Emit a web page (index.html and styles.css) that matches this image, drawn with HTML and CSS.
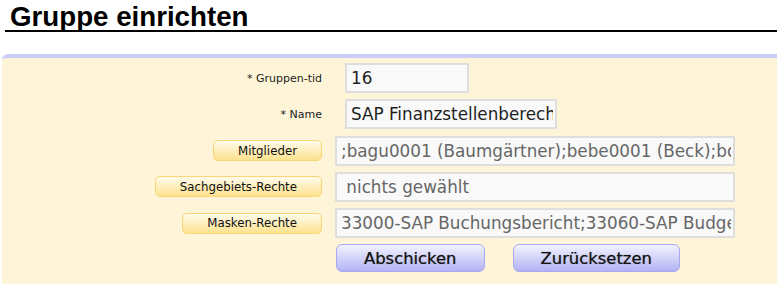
FILE: index.html
```html
<!DOCTYPE html>
<html lang="de">
<head>
    <meta charset="UTF-8">
    <title>Gruppe einrichten</title>
    <link rel="stylesheet" href="styles.css">
</head>
<body>
    <h1 class="page-title">Gruppe einrichten</h1>

    <div class="panel">
        <form class="group-form">
            <label class="field-label">* Gruppen-tid</label>
            <div class="field"><input class="text-input input-id" type="text" value="16"></div>

            <label class="field-label">* Name</label>
            <div class="field"><input class="text-input input-name" type="text" value="SAP Finanzstellenberechtigung"></div>

            <div class="field-label"><button type="button" class="pick-button">Mitglieder</button></div>
            <div class="field"><input class="text-input input-wide" type="text" readonly value=";bagu0001 (Baumgärtner);bebe0001 (Beck);bo"></div>

            <div class="field-label"><button type="button" class="pick-button">Sachgebiets-Rechte</button></div>
            <div class="field"><input class="text-input input-wide" type="text" readonly value=" nichts gewählt"></div>

            <div class="field-label"><button type="button" class="pick-button">Masken-Rechte</button></div>
            <div class="field"><input class="text-input input-wide" type="text" readonly value="33000-SAP Buchungsbericht;33060-SAP Budgetbericht"></div>

            <div></div>
            <div class="actions">
                <button type="submit" class="submit-button">Abschicken</button>
                <button type="reset" class="submit-button">Zurücksetzen</button>
            </div>
        </form>
    </div>
</body>
</html>
```

FILE: styles.css
```css
body {
    margin: 0;
    font-family: "DejaVu Sans", Verdana, sans-serif;
    color: #222;
    background: #fff;
    overflow: hidden;
}

.page-title {
    margin: 3px 0 0 5px;
    padding-left: 5px;
    font-family: "Liberation Sans", Arial, sans-serif;
    font-size: 27.7px;
    line-height: 27px;
    font-weight: bold;
    color: #000;
    border-bottom: 2px solid #000;
}

.panel {
    margin: 22px 0 0 2px;
    min-height: 221px;
    border-top: 4px solid #ccccfa;
    border-radius: 6px 0 0 0;
    background: #fef5d8;
    padding-top: 5px;
}

.group-form {
    display: grid;
    grid-template-columns: 320px 1fr;
    column-gap: 13px;
    row-gap: 6.3px;
    align-items: center;
}

.field-label {
    text-align: right;
    font-size: 11px;
    color: #222;
}

.field {
    height: 30px;
    display: flex;
    align-items: center;
}

.text-input {
    box-sizing: border-box;
    height: 30px;
    margin: 0;
    padding: 0 2px 0 4px;
    border: 2px solid #dedede;
    background: #f9f9f9;
    font-family: "DejaVu Sans", Verdana, sans-serif;
    font-size: 16.8px;
    color: #1e1e1e;
    outline: none;
}

.input-id {
    margin-left: 10px;
    width: 124px;
}

.input-name {
    margin-left: 10px;
    width: 212px;
}

.input-wide {
    width: 400px;
    color: #666;
}

.pick-button {
    box-sizing: border-box;
    height: 21px;
    margin: 0;
    padding: 0 24px;
    border: 1px solid #f8d676;
    border-radius: 5px;
    background: linear-gradient(#fffbec, #fde28e);
    font-family: "DejaVu Sans", Verdana, sans-serif;
    font-size: 11.8px;
    color: #111;
    cursor: pointer;
}

.actions {
    display: flex;
    gap: 28px;
    padding-left: 1px;
}

.submit-button {
    box-sizing: border-box;
    height: 28px;
    margin: 0;
    padding: 0 27px;
    border: 1px solid #a9a9f2;
    border-radius: 6px;
    background: linear-gradient(#f3f3ff, #b3b3f4);
    font-family: "DejaVu Sans", Verdana, sans-serif;
    font-size: 16.4px;
    color: #111;
    text-shadow: 0 0 1px #666;
    cursor: pointer;
}
```
